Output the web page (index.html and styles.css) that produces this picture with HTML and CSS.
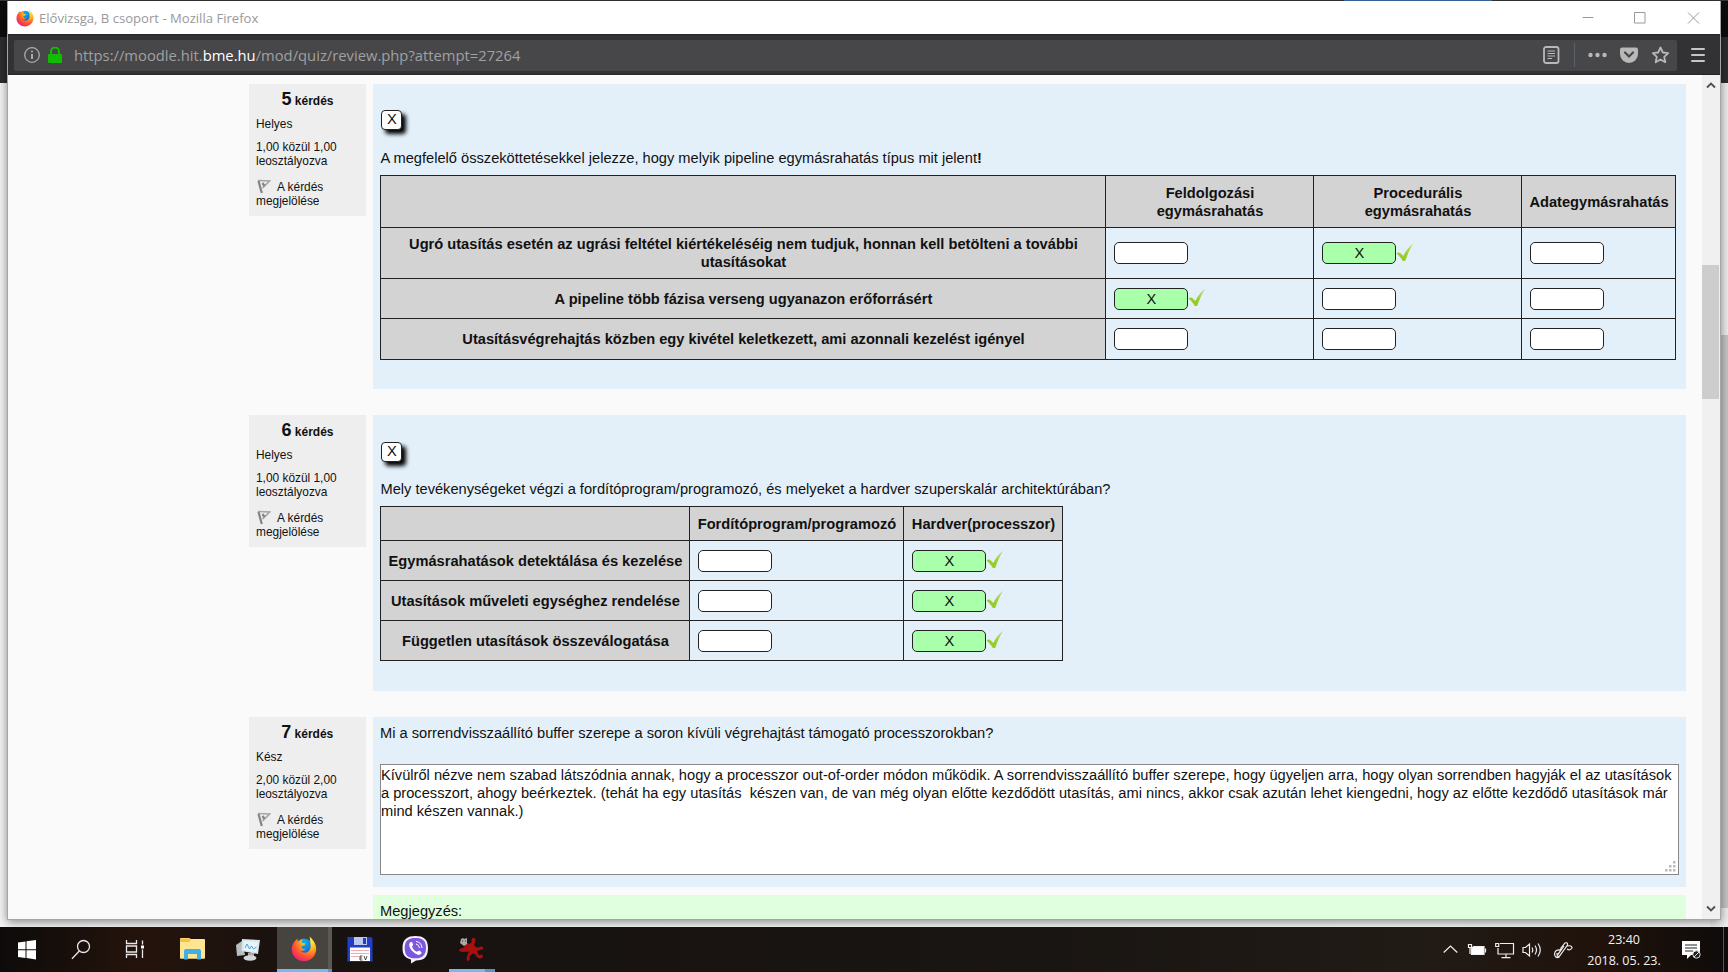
FILE: index.html
```html
<!DOCTYPE html>
<html lang="hu">
<head>
<meta charset="utf-8">
<title>Elővizsga, B csoport</title>
<link rel="stylesheet" href="styles.css">
</head>
<body>
<svg width="0" height="0" class="defs">
  <defs>
    <radialGradient id="fxg" cx=".75" cy=".15" r="1"><stop offset="0" stop-color="#fff44f"/><stop offset=".35" stop-color="#ffb51f"/><stop offset=".65" stop-color="#ff5a2a"/><stop offset="1" stop-color="#e31587"/></radialGradient>
    <radialGradient id="fxb" cx=".5" cy=".2" r=".8"><stop offset="0" stop-color="#00b8f5"/><stop offset="1" stop-color="#3a3fb8"/></radialGradient>
    <symbol id="firefox" viewBox="0 0 26 26">
      <circle cx="13" cy="12" r="9.5" fill="url(#fxb)"/>
      <path d="M18.500.5c1 3.500.5 5 1 7.500.5 3 0 6-2 7.500-2.500 2-6.500 1.500-8-1 2 .8 3.700.2 5-1-2 0-3.700-1-4-2.700.2-1 1.300-1.200 2.600-1.200.7-.8 1.500-1.300 1-2-1-.3-2.800-.3-3.400-1.300.1-1.200.5-2 1.300-2.900-2.300.2-3.900 1.100-4.700 2.200-.9-.7-1-1.800-.9-3C2.500 6 .7 9.500.7 13.500.7 20 6 25.300 12.800 25.300 19.800 25.300 25.200 20 25.200 13c0-5-2.700-9-6.700-12.500z" fill="url(#fxg)"/>
    </symbol>
    <linearGradient id="ckg" x1="0" y1="1" x2="1" y2="0"><stop offset=".4" stop-color="#97cc2b"/><stop offset="1" stop-color="#bde07a"/></linearGradient>
    <symbol id="check" viewBox="0 0 18 19"><path d="M.5 10.500C2 9 3.500 9.200 4.500 10.200L7.300 13C9.500 8.500 13 4 17.300.6 14.200 5.500 11.500 11.500 9.200 18H6.800C5 15 3 12.500.5 10.500z" fill="url(#ckg)"/></symbol>
    <symbol id="flag" viewBox="0 0 14 15"><path d="M1 1.500 12.500 2 5.500 9" fill="none" stroke="#a5a5a5" stroke-width="1.700"/><path d="M1.500 2 4.800 14M5.500 4 7.500 7" fill="none" stroke="#858585" stroke-width="2.300"/></symbol>
  </defs>
</svg>

<div class="desktop">
  <div class="back-window"><div class="back-top"></div><div class="back-bar"></div><div class="back-page"><div class="back-scroll"><i></i></div></div><b class="back-accent"></b></div>

  <main class="window">
    <header class="titlebar">
      <svg class="fx-small"><use href="#firefox"/></svg>
      <span class="win-title">Elővizsga, B csoport - Mozilla Firefox</span>
      <svg class="win-controls" viewBox="0 0 118 12" fill="none" stroke="#999" stroke-width="1"><path d="M.5 5.500h11M52.500 .5h10.500v10.500H52.500zM106 .5l11 11M117 .5l-11 11"/></svg>
    </header>
    <div class="toolbar">
      <div class="urlbar">
        <svg class="info-icon" viewBox="0 0 16 16"><circle cx="8" cy="8" r="7.300" fill="none" stroke="#a9a9aa" stroke-width="1.300"/><path d="M8 7v5" stroke="#a9a9aa" stroke-width="2"/><circle cx="8" cy="4.500" r="1.100" fill="#a9a9aa"/></svg>
        <svg class="lock" viewBox="0 0 14 16"><path d="M3 8V4.500a4 4 0 0 1 8 0V8" fill="none" stroke="#12bc00" stroke-width="2"/><rect y="7" width="14" height="9" rx="1.200" fill="#12bc00"/></svg>
        <span class="url">https://moodle.hit.<b>bme.hu</b>/mod/quiz/review.php?attempt=27264</span>
        <svg class="url-tools" viewBox="0 0 128 24" fill="none" stroke="#b8b8b9">
          <rect x="1" y="4" width="14.500" height="16" rx="2" stroke-width="1.800"/><path d="M4.500 8h7.500M4.500 10.500h7.500M4.500 13h7.500M4.500 15.500h4.500" stroke-width="1.100"/>
          <path d="M31.500 0v24" stroke="#5a6068" stroke-width="1"/>
          <g fill="#b8b8b9" stroke="none"><circle cx="47.500" cy="12" r="2.200"/><circle cx="54.500" cy="12" r="2.200"/><circle cx="61.500" cy="12" r="2.200"/><path d="M79 4.500h14q2 0 2 2V11a9 9 0 0 1-18 0V6.500q0-2 2-2z"/></g>
          <path d="M82 9.500l4 4 4-4" stroke="#474749" stroke-width="2.200" stroke-linecap="round"/>
          <path d="M117.500 4.500l2.300 5 5.400.6-4 3.700 1.100 5.400-4.800-2.700-4.800 2.700 1.100-5.400-4-3.700 5.400-.6z" stroke-width="1.800" stroke-linejoin="round"/>
        </svg>
      </div>
      <div class="menu"><i></i><i></i><i></i></div>
    </div>
    <div class="viewport">
      <div class="page">
        <section class="question q5">
          <aside class="info"><h3><b>5</b> kérdés</h3><p>Helyes</p><p>1,00 közül 1,00<br>leosztályozva</p><p class="flagrow"><svg class="flag"><use href="#flag"/></svg>A kérdés<br>megjelölése</p></aside>
          <div class="card">
            <span class="chip">X</span>
            <p class="prompt pr5">A megfelelő összeköttetésekkel jelezze, hogy melyik pipeline egymásrahatás típus mit jelent<b>!</b></p>
            <div class="grid t5">
              <div class="th"></div><div class="th">Feldolgozási<br>egymásrahatás</div><div class="th">Procedurális<br>egymásrahatás</div><div class="th">Adategymásrahatás</div>
              <div class="th">Ugró utasítás esetén az ugrási feltétel kiértékeléséig nem tudjuk, honnan kell betölteni a további<br>utasításokat</div><div class="td"><span class="box"></span></div><div class="td"><span class="box ok">X</span><svg class="check"><use href="#check"/></svg></div><div class="td"><span class="box"></span></div>
              <div class="th">A pipeline több fázisa verseng ugyanazon erőforrásért</div><div class="td"><span class="box ok">X</span><svg class="check"><use href="#check"/></svg></div><div class="td"><span class="box"></span></div><div class="td"><span class="box"></span></div>
              <div class="th">Utasításvégrehajtás közben egy kivétel keletkezett, ami azonnali kezelést igényel</div><div class="td"><span class="box"></span></div><div class="td"><span class="box"></span></div><div class="td"><span class="box"></span></div>
            </div>
          </div>
        </section>
        <section class="question q6">
          <aside class="info"><h3><b>6</b> kérdés</h3><p>Helyes</p><p>1,00 közül 1,00<br>leosztályozva</p><p class="flagrow"><svg class="flag"><use href="#flag"/></svg>A kérdés<br>megjelölése</p></aside>
          <div class="card">
            <span class="chip">X</span>
            <p class="prompt pr6">Mely tevékenységeket végzi a fordítóprogram/programozó, és melyeket a hardver szuperskalár architektúrában?</p>
            <div class="grid t6">
              <div class="th"></div><div class="th">Fordítóprogram/programozó</div><div class="th">Hardver(processzor)</div>
              <div class="th">Egymásrahatások detektálása és kezelése</div><div class="td"><span class="box"></span></div><div class="td"><span class="box ok">X</span><svg class="check"><use href="#check"/></svg></div>
              <div class="th">Utasítások műveleti egységhez rendelése</div><div class="td"><span class="box"></span></div><div class="td"><span class="box ok">X</span><svg class="check"><use href="#check"/></svg></div>
              <div class="th">Független utasítások összeválogatása</div><div class="td"><span class="box"></span></div><div class="td"><span class="box ok">X</span><svg class="check"><use href="#check"/></svg></div>
            </div>
          </div>
        </section>
        <section class="question q7">
          <aside class="info"><h3><b>7</b> kérdés</h3><p>Kész</p><p>2,00 közül 2,00<br>leosztályozva</p><p class="flagrow"><svg class="flag"><use href="#flag"/></svg>A kérdés<br>megjelölése</p></aside>
          <div class="column">
            <div class="card">
              <p class="prompt pr7">Mi a sorrendvisszaállító buffer szerepe a soron kívüli végrehajtást támogató processzorokban?</p>
              <div class="answer">Kívülről nézve nem szabad látszódnia annak, hogy a processzor out-of-order módon működik. A sorrendvisszaállító buffer szerepe, hogy ügyeljen arra, hogy olyan sorrendben hagyják el az utasítások<br>a processzort, ahogy beérkeztek. (tehát ha egy utasítás&nbsp; készen van, de van még olyan előtte kezdődött utasítás, ami nincs, akkor csak azután lehet kiengedni, hogy az előtte kezdődő utasítások már<br>mind készen vannak.)
                <svg class="grip" viewBox="0 0 11 11" fill="#bbb"><path d="M8 0h2.500v2.500H8zM4 4h2.500v2.500H4zM8 4h2.500v2.500H8zM0 8h2.500v2.500H0zM4 8h2.500v2.500H4zM8 8h2.500v2.500H8z"/></svg>
              </div>
            </div>
            <div class="comment">Megjegyzés:</div>
          </div>
        </section>
      </div>
      <div class="scrollbar">
        <svg viewBox="0 0 10 7"><path d="M1 5.500l4-4 4 4" fill="none" stroke="#505050" stroke-width="1.900"/></svg>
        <i class="thumb"></i>
        <svg viewBox="0 0 10 7"><path d="M1 1.500l4 4 4-4" fill="none" stroke="#505050" stroke-width="1.900"/></svg>
      </div>
    </div>
  </main>

  <footer class="taskbar">
    <svg class="apps" viewBox="0 0 500 45">
      <path d="M18 15.500l7.500-1v7.700H18zM26.500 14.300L36 13v9.200h-9.500zM18 23.200h7.500v7.700l-7.500-1zM26.500 23.200H36v9.200l-9.500-1.300z" fill="#fff"/>
      <g fill="none" stroke="#e8e8e8" stroke-width="1.300"><circle cx="83.500" cy="19.500" r="6"/><path d="M79.300 24L72 31.700"/><path d="M126.500 13v3.500h10v-3.500M126.500 31v-3.500h10v3.500M126.500 19h10v6h-10zM142.500 13.500v4M142.500 22.500v8.500"/></g><rect x="141" y="18.500" width="3" height="3" fill="#fff"/>
      <path d="M180 12q0-1 1-1h8l2 1h13q1 0 1 1v18q0 .8-1 .8h-23q-1 0-1-.8z" fill="#ffe592"/><path d="M181 11.500h8l2 1.500-2 2h-9v-3z" fill="#f6c244"/><path d="M184 32.500V24q0-2 2-2h13q2 0 2 2v8.500h-4V27h-9v5.500z" fill="#3fb0e6"/>
      <path d="M236 18l6-4 3 14-8 1z" fill="#b9bdc0"/><path d="M242 12l18 1-2 14-16.500-3z" fill="#dde4e9"/><path d="M244 14l14 1-1.500 10-13-2z" fill="#e3f4fd"/><path d="M245 21l2-4 2.500 5 2-3 2 3 3-2" fill="none" stroke="#5b9fc4"/><path d="M248 26h6v4h-6z" fill="#a5a9ac"/><ellipse cx="250" cy="31" rx="6.500" ry="2.800" fill="#d5d8da"/>
      <path d="M277 0h51v45h-51z" fill="#47433f"/><path d="M328 0h4v45h-4z" fill="#5b5753"/><path d="M277 42h51v3h-51z" fill="#76b9ed"/><path d="M328 42h4v3h-4z" fill="#5c93bf"/>
      <use href="#firefox" x="291" y="9" width="26" height="26"/>
      <path d="M347.500 10H371l1.500 1.500V34.500h-25z" fill="#223fc4"/><path d="M354 10h13v8h-13z" fill="#bcc8ec"/><path d="M363 11h3v6h-3z" fill="#223fc4"/><path d="M350 20.500h20V34h-20z" fill="#fff"/><path d="M351 23.500h18M351 26.500h18M351 29.500h8" stroke="#f3a9b4" stroke-width="1.100"/><path d="M360 29h2.500m-2.500 2h2m-2 2h2.500m-2.500-4v4m4-4l1.500 4 1.500-4" stroke="#222" stroke-width=".8" fill="none"/>
      <path d="M415.500 9c8 0 12.500 3 12.500 12s-4 12.500-12 12.500l-5 3v-4C405 31 402.500 28 402.500 21c0-9 5-12 13-12z" fill="#f3f0ff"/><path d="M415.500 11c7 0 10.500 2.500 10.500 10s-4 10.300-10.500 10.300C408 31.300 404.700 28.500 404.700 21s3.800-10 10.800-10z" fill="#7d57df"/><path d="M410 15.500c1-1 2-.5 3 1.500.7 1.500-1.500 2-.8 3.300q1.300 3 4 4.300c1.300.4 1.800-1.500 3.200-.8 2 1 2.700 2 1.700 3-2 2.300-5 .7-8-2-3-3-5-7-3.100-9.300z" fill="#fff"/><path d="M416 14.500q5.500.5 6 6.500M416 17q3 .5 3.500 4" fill="none" stroke="#fff" stroke-width="1"/>
      <path d="M464 16q3-1 5 1l2-1q1-1 .5-3.500 1-2.500 3-1.500 1.500 1 1 3l-1.500 4 1.500 2q3 1 5-.5 3-.5 3 1.500-.5 2-3.500 2l-3 1 1 3q1.500 2 3 .5 2-.5 2 1.500-.5 2.500-3 2.500-3 0-4.500-4l-3-1-3 3q1 4-1.500 4.500-2-.5-1-4.500l2-5-6 .5q-4 0-4-2.500 1-1.500 4-1.500l2-2z" fill="#a80f0f"/><path d="M461 12l2-1 1 1 3-1v6l-3 2-4-3z" fill="#aaa"/><path d="M462 14h1m2 0h1" stroke="#333"/>
      <path d="M449 42h36v3h-36z" fill="#76b9ed"/><path d="M485 42h10v3h-10z" fill="#5c93bf"/>
    </svg>
    <div class="tray">
      <svg class="tray-icons" viewBox="0 0 132 24" fill="none" stroke="#eee" stroke-width="1.200">
        <path d="M.7 14.500l6.800-6.500 6.800 6.500"/>
        <path d="M30.500 8.500H41v8H28.500v-6z" fill="#fff"/><path d="M42.500 10.500v4M25.500 6.500h3v3h-3zM27 10v6"/>
        <path d="M57 5.500h13.500v10.500H55V10M63 16v3.500M58.500 19.700h9M52.700 5.500h3v3h-3z"/>
        <path d="M80 9.500h2.500l4-3.500v12l-4-3.500H80zM89 9.500q1.500 2.500 0 5M92 7.500q3 4.500 0 9M95 5.500q4.500 6.500 0 13"/>
        <path d="M113 16q4 0 5-6l4-5q3-1 2.500 2l-8 11q-2 2-2.500 0l7-10M118 12q-6-1-6.500 4 .5 5 5 3M124 8q5-1 5 2-2 3-5 1"/>
      </svg>
      <div class="clock"><span>23:40</span><span>2018. 05. 23.</span></div>
      <svg class="notif" viewBox="0 0 19 20"><path d="M0 1h18v14h-9l-4 4v-4H0z" fill="#fff"/><path d="M3 5h12M3 8h12M3 11h8" stroke="#222"/><circle cx="14.500" cy="14.500" r="3.700" fill="#222" stroke="#ddd"/><path d="M12 17l5-5" stroke="#ddd"/></svg>
      <i class="peek"></i>
    </div>
  </footer>
</div>
</body>
</html>
```
FILE: styles.css
```css
* { box-sizing: border-box; }
body { margin: 0; overflow: hidden; font-family: "Liberation Sans", Arial, sans-serif; font-size: 14.65px; color: #111; }
p, h3 { margin: 0; }
svg { display: block; flex: none; }
.defs { position: absolute; }
.desktop { position: relative; width: 1728px; height: 972px; display: flex; flex-direction: column; justify-content: space-between; overflow: hidden; }

.back-window { position: absolute; inset: 0; display: flex; flex-direction: column; }
.back-top { height: 37px; background: #0c0c0d; border-top: 1px solid #38383b; }
.back-bar { height: 46px; background: #2d2d2f; }
.back-page { flex: 1; background: #f4f4f4; display: flex; justify-content: flex-end; }
.back-scroll { width: 18px; background: #ededed; padding-top: 252px; }
.back-scroll i { display: block; height: 573px; background: #c4c4c4; }
.back-accent { position: absolute; top: 0; left: 1344px; width: 148px; height: 1px; background: #3a72b0; }

.window { position: relative; width: 1714px; height: 919px; margin: 1px 0 0 7px; border: solid #a5a5a5; border-width: 0 1px 1px; display: flex; flex-direction: column; box-shadow: 0 2px 9px rgba(0,0,0,.45); background: #fafafa; overflow: hidden; }
.titlebar { height: 33px; flex: none; display: flex; align-items: center; background: #fff; padding: 0 20px 0 8px; }
.fx-small { width: 18px; height: 18px; }
.win-title { margin-left: 5px; font: 13.1px "Open Sans", sans-serif; color: #999; white-space: nowrap; }
.win-controls { width: 118px; height: 12px; margin-left: auto; }
.toolbar { height: 41px; flex: none; background: #323234; border: solid #252526; border-width: 1px 0; display: flex; align-items: center; padding: 1px 15px 0 6px; justify-content: space-between; }
.urlbar { width: 1663px; height: 31px; background: #474749; border-radius: 2px; display: flex; align-items: center; padding: 0 6px 0 10px; }
.info-icon { width: 16px; height: 16px; }
.lock { width: 14px; height: 16px; margin-left: 8px; }
.url { margin-left: 12px; font: 14.77px "Open Sans", sans-serif; color: #a0a0a2; white-space: nowrap; }
.url b { font-weight: 400; color: #fff; }
.url-tools { width: 128px; height: 24px; margin-left: auto; }
.menu { width: 14px; display: grid; gap: 4px; }
.menu i { height: 2px; background: #c5c5c6; border-radius: 1px; }

.viewport { flex: 1; min-height: 0; display: flex; }
.page { flex: 1; min-width: 0; overflow: hidden; padding: 8px 16px 0 241px; border-top: 1px solid #fff; }
.question { display: flex; gap: 7.500px; align-items: flex-start; }
.q5 { height: 331px; }
.q6 { height: 302px; }
.info { width: 117px; height: 132px; background: #eee; padding: 5px 7px; font-size: 11.9px; line-height: 14.600px; white-space: nowrap; }
.info h3 { text-align: center; font-size: 12px; line-height: 20px; }
.info h3 b { font-size: 18px; }
.info p { margin-top: 8px; }
.info h3 + p { margin-top: 6px; }
.info .flagrow { margin-top: 11px; }
.flag { display: inline-block; width: 14px; height: 15px; margin: -2px 6px -2px 1px; vertical-align: -1px; }
.card { width: 1313px; background: #e3f0fa; padding: 0 7px; }
.q5 .card { height: 305px; padding-top: 26px; }
.q6 .card { height: 276px; padding-top: 27px; }
.chip { display: block; width: 21px; height: 20px; margin-left: 1px; border: 1px solid #222; border-radius: 4px; background: #fff; box-shadow: 4px 4px 4px #000; text-align: center; line-height: 17px; }
.prompt { line-height: 18px; white-space: nowrap; }
.pr5 { margin-top: 19px; }
.pr6 { margin-top: 18px; }
.grid { display: grid; background: #e3f0fa; border: 1px solid #222; width: max-content; margin-top: 8px; }
.t5 { grid-template-columns: 725px 208px 208px 153px; grid-template-rows: 52px 51px 40px 40px; }
.t6 { grid-template-columns: 309px 214px 158px; grid-template-rows: 34px 40px 40px 39px; }
.th, .td { border: solid #222; border-width: 0 1px 1px 0; }
.t5 > :nth-child(4n), .t6 > :nth-child(3n) { border-right: 0; }
.t5 > :nth-last-child(-n+4), .t6 > :nth-last-child(-n+3) { border-bottom: 0; }
.th { background: #d3d3d3; font-weight: 700; text-align: center; line-height: 18px; white-space: nowrap; align-content: center; display: grid; justify-content: center; }
.th { display: block; }
.td { display: flex; align-items: center; padding-left: 8px; }
.box { width: 74px; height: 22px; border: 1px solid #222; border-radius: 5px; background: #fff; text-align: center; line-height: 20px; }
.ok { background: #afa; }
.check { width: 18px; height: 19px; margin-bottom: 2px; }
.q7 .card { height: 170px; padding-top: 7px; }
.answer { position: relative; width: 1299px; height: 111px; margin-top: 22px; border: 1px solid #888; background: #fff; line-height: 18px; padding-top: 1px; white-space: nowrap; }
.grip { position: absolute; right: 2px; bottom: 2px; width: 11px; height: 11px; }
.comment { margin-top: 8px; height: 40px; background: #dfffdf; padding: 7px; line-height: 18px; }
.scrollbar { width: 18px; background: #f0f0f0; display: flex; flex-direction: column; align-items: center; padding: 7px 0; }
.scrollbar svg { width: 10px; height: 7px; }
.thumb { width: 17px; height: 134px; margin: 176px 1px auto 0; background: #cdcdcd; }

.taskbar { position: relative; height: 45px; flex: none; display: flex; justify-content: space-between; background: linear-gradient(90deg, #0d0b0a, #24130c 8%, #17120f 18%, #191512 60%, #211b16 82%, #20120b 93%, #0e0b0a); }
.apps { width: 500px; height: 45px; }
.tray { display: flex; align-items: center; color: #f4f4f4; }
.tray-icons { width: 132px; height: 24px; }
.clock { width: 90px; margin-left: 4px; display: grid; justify-items: center; font: 12.500px/21px "Open Sans", sans-serif; white-space: nowrap; }
.notif { width: 19px; height: 20px; margin-left: 13px; }
.peek { width: 1px; height: 45px; background: #555; margin: 0 4px 0 22px; }
```
